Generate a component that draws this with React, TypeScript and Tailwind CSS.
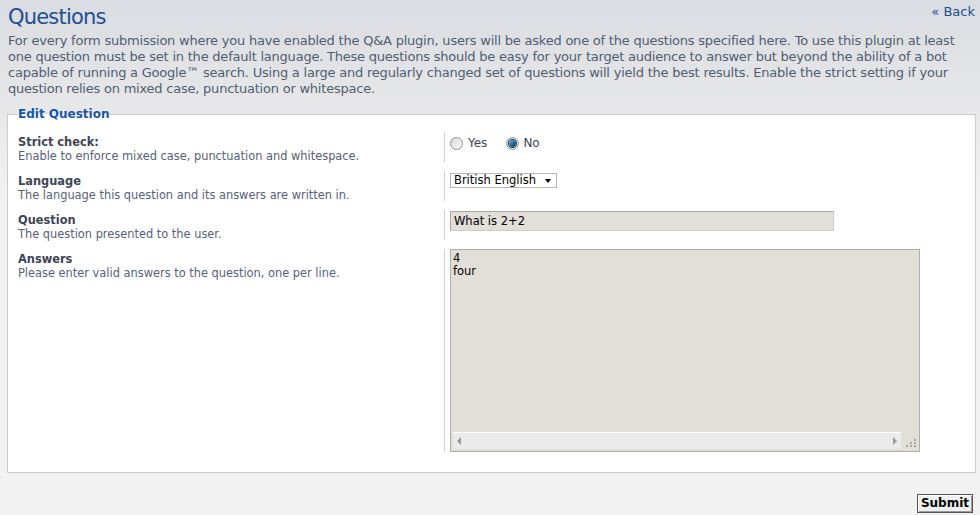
import type { ReactNode } from 'react';

const font = { fontFamily: '"DejaVu Sans", Verdana, sans-serif' };

function Radio({ checked }: { checked?: boolean }) {
  return (
    <span className="relative inline-flex h-[13px] w-[13px] items-center justify-center rounded-full border border-[#8f8f8f] bg-gradient-to-br from-[#d8d8d8] to-[#fbfbfb]">
      {checked && (
        <span className="h-[7px] w-[7px] rounded-full bg-gradient-to-br from-[#7ec0e8] via-[#1f6fa3] to-[#0b3c5e] ring-1 ring-[#1a3550]" />
      )}
    </span>
  );
}

function Row({ label, desc, children, tall }: { label: string; desc: string; children: ReactNode; tall?: boolean }) {
  return (
    <div className="flex">
      <div className="w-[426px] shrink-0 pt-[3px]">
        <div className="text-[11.4px] font-bold leading-[14px] text-[#3d4657]">{label}</div>
        <div className="text-[11.4px] leading-[14px] text-[#56627a]">{desc}</div>
      </div>
      <div className={`border-l border-[#cfcfcf] pl-[5px] ${tall ? '' : 'h-[30px]'}`}>{children}</div>
    </div>
  );
}

export default function App() {
  return (
    <div
      style={font}
      className="min-h-screen bg-[linear-gradient(to_bottom,#d9dce1_0px,#e9e9ea_120px,#f2f2f2_200px)] pl-[7px] pr-[4px]"
    >
      <div className="flex items-start justify-between">
        <h1 className="ml-px pt-[3px] text-[21px] leading-[28px] tracking-[-0.8px] text-[#1c4f93]">Questions</h1>
        <a className="mt-[4px] mr-[1px] text-[13px] leading-[16px] text-[#1c4f93]">« Back</a>
      </div>
      <p className="ml-px mt-[2px] text-[13px] leading-[16px] tracking-[-0.22px] text-[#525d72] whitespace-nowrap">
        For every form submission where you have enabled the Q&amp;A plugin, users will be asked one of the questions specified here. To use this plugin at least
        <br />
        one question must be set in the default language. These questions should be easy for your target audience to answer but beyond the ability of a bot
        <br />
        capable of running a Google™ search. Using a large and regularly changed set of questions will yield the best results. Enable the strict setting if your
        <br />
        question relies on mixed case, punctuation or whitespace.
      </p>

      <fieldset className="mt-[10px] border border-[#cccccc] bg-white px-[10px] pb-[20px]">
        <legend className="text-[12px] font-bold leading-[14px] text-[#1656a6]">Edit Question</legend>
        <div className="flex flex-col gap-[8px] pt-[11px]">
          <Row label="Strict check:" desc="Enable to enforce mixed case, punctuation and whitespace.">
            <div className="flex items-center pt-[4px] text-[12px] leading-[14px] text-[#3d4657]">
              <Radio />
              <span className="ml-[5px] mr-[19px]">Yes</span>
              <Radio checked />
              <span className="ml-[4px]">No</span>
            </div>
          </Row>
          <Row label="Language" desc="The language this question and its answers are written in.">
            <div className="mt-[2px] flex h-[15px] w-[107px] items-center justify-between border border-[#b8b8b8] bg-white pl-[3px] pr-[5px] text-[11.5px] leading-[13px] text-black">
              <span>British English</span>
              <span className="h-0 w-0 border-x-[3.5px] border-t-[4px] border-x-transparent border-t-black" />
            </div>
          </Row>
          <Row label="Question" desc="The question presented to the user.">
            <div className="mt-[1px] h-[20px] w-[384px] border border-[#a8a8a8] border-b-[#d0ccc6] border-r-[#d0ccc6] bg-[#e2ded8] pl-[3px] text-[11.5px] leading-[18px] text-black">
              What is 2+2
            </div>
          </Row>
          <Row label="Answers" desc="Please enter valid answers to the question, one per line." tall>
            <div className="flex h-[203px] w-[470px] flex-col border border-[#b0aca6] bg-[#e2ded8]">
              <textarea
                readOnly
                defaultValue={'4\nfour'}
                className="flex-1 resize-none bg-transparent pl-[2px] pt-[2px] text-[11.5px] leading-[13px] text-black outline-none"
                style={font}
              />
              <div className="flex h-[19px] items-center pb-[2px] pl-[2px]">
                <div className="flex h-[17px] flex-1 items-center justify-between border-t border-white bg-[#ebebeb] px-[4px]">
                  <span className="h-0 w-0 border-y-[4px] border-r-[4px] border-y-transparent border-r-[#9a9a9a]" />
                  <span className="h-0 w-0 border-y-[4px] border-l-[4px] border-y-transparent border-l-[#9a9a9a]" />
                </div>
                <div className="grid h-[17px] w-[18px] grid-cols-3 content-end justify-items-center gap-px pb-[2px] pl-[4px] pr-[3px]">
                  <span />
                  <span />
                  <span className="h-[2px] w-[2px] bg-[#a8a8a8]" />
                  <span />
                  <span className="h-[2px] w-[2px] bg-[#a8a8a8]" />
                  <span className="h-[2px] w-[2px] bg-[#a8a8a8]" />
                  <span className="h-[2px] w-[2px] bg-[#a8a8a8]" />
                  <span className="h-[2px] w-[2px] bg-[#a8a8a8]" />
                  <span className="h-[2px] w-[2px] bg-[#a8a8a8]" />
                </div>
              </div>
            </div>
          </Row>
        </div>
      </fieldset>

      <div className="flex justify-end pt-[21px] pr-[3px]">
        <button
          style={font}
          className="h-[19px] w-[56px] border border-[#555] bg-[#f0f0f0] text-[12px] font-bold leading-[15px] text-black shadow-[inset_1px_1px_0_#fff,inset_-1px_-1px_0_#9a9a9a]"
        >
          Submit
        </button>
      </div>
    </div>
  );
}
